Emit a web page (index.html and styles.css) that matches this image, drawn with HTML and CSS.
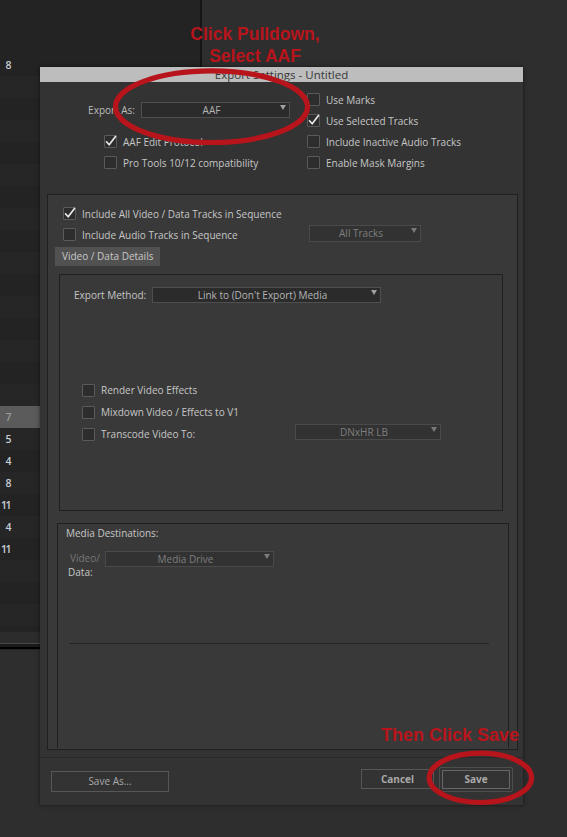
FILE: index.html
```html
<!DOCTYPE html>
<html lang="en">

<head>
	<meta charset="UTF-8">
	<meta name="viewport" content="width=device-width, initial-scale=1.0">
	<title>Export Settings - Untitled</title>
	<link rel="stylesheet" href="styles.css">
</head>

<body>
	<!-- bin window behind the dialog -->
	<div class="bin">
		<div class="binHead"></div>
		<div class="binRows">
			<div class="binRow"><span class="num">8</span></div>
			<div class="binRow"></div>
			<div class="binRow"></div>
			<div class="binRow"></div>
			<div class="binRow"></div>
			<div class="binRow"></div>
			<div class="binRow"></div>
			<div class="binRow"></div>
			<div class="binRow"></div>
			<div class="binRow"></div>
			<div class="binRow"></div>
			<div class="binRow"></div>
			<div class="binRow"></div>
			<div class="binRow"></div>
			<div class="binRow"></div>
			<div class="binRow"></div>
			<div class="binRow selected"><span class="num">7</span></div>
			<div class="binRow"><span class="num">5</span></div>
			<div class="binRow"><span class="num">4</span></div>
			<div class="binRow"><span class="num">8</span></div>
			<div class="binRow"><span class="num">11</span></div>
			<div class="binRow"><span class="num">4</span></div>
			<div class="binRow"><span class="num">11</span></div>
			<div class="binRow"></div>
			<div class="binRow"></div>
			<div class="binRow"></div>
		</div>
		<div class="binFoot"></div>
	</div>

	<div class="dialog">
		<div class="dialogTitle">Export Settings - Untitled</div>

		<div class="top">
			<div class="exportAs">
				<span class="exportLabel">Export As:</span>
				<div class="select exportSelect">AAF</div>
			</div>
			<label class="check colRight rowOne">
				<span class="box"></span>Use Marks
			</label>
			<label class="check colRight rowTwo">
				<span class="box"><svg viewBox="0 0 13 13"><path d="M2.5 6.8 L5.2 9.8 L11.5 1.5" /></svg></span>Use Selected Tracks
			</label>
			<label class="check colLeft rowThree">
				<span class="box"><svg viewBox="0 0 13 13"><path d="M2.5 6.8 L5.2 9.8 L11.5 1.5" /></svg></span>AAF Edit Protocol
			</label>
			<label class="check colRight rowThree">
				<span class="box"></span>Include Inactive Audio Tracks
			</label>
			<label class="check colLeft rowFour">
				<span class="box"></span>Pro Tools 10/12 compatibility
			</label>
			<label class="check colRight rowFour">
				<span class="box"></span>Enable Mask Margins
			</label>
		</div>

		<div class="panel">
			<label class="check panelCheck">
				<span class="box"><svg viewBox="0 0 13 13"><path d="M2.5 6.8 L5.2 9.8 L11.5 1.5" /></svg></span>Include All Video / Data Tracks in Sequence
			</label>
			<div class="audioRow">
				<label class="check panelCheck audioCheck">
					<span class="box"></span>Include Audio Tracks in Sequence
				</label>
				<div class="select disabled allTracks">All Tracks</div>
			</div>

			<div class="tab">Video / Data Details</div>

			<div class="details">
				<div class="methodRow">
					<span class="methodLabel">Export Method:</span>
					<div class="select methodSelect">Link to (Don't Export) Media</div>
				</div>
				<div class="effects">
					<label class="check fxCheck">
						<span class="box"></span>Render Video Effects
					</label>
					<label class="check fxCheck">
						<span class="box"></span>Mixdown Video / Effects to V1
					</label>
					<div class="transcodeRow">
						<label class="check fxCheck transcodeCheck">
							<span class="box"></span>Transcode Video To:
						</label>
						<div class="select disabled codecSelect">DNxHR LB</div>
					</div>
				</div>
			</div>

			<div class="media">
				<div class="mediaTitle">Media Destinations:</div>
				<div class="destRow">
					<div class="destLabel"><span class="dim">Video/</span><br><span class="dataWord">Data:</span></div>
					<div class="select disabled driveSelect">Media Drive</div>
				</div>
				<div class="mediaRule"></div>
			</div>
		</div>

		<div class="footer">
			<div class="btn saveAs">Save As...</div>
			<div class="btn cancel">Cancel</div>
			<div class="saveOuter">
				<div class="btn save">Save</div>
			</div>
		</div>
	</div>

	<!-- red tutorial marks drawn over the screenshot -->
	<svg class="marks" width="567" height="837" viewBox="0 0 567 837">
		<ellipse cx="211.5" cy="106.7" rx="96" ry="35.8" />
		<ellipse cx="480.4" cy="777.8" rx="51.2" ry="24.7" />
	</svg>
	<div class="note notePulldown">Click Pulldown,<br>Select AAF</div>
	<div class="note noteSave">Then Click Save</div>
</body>

</html>
```

FILE: styles.css
```css
body {
	margin: 0;
	width: 567px;
	height: 837px;
	overflow: hidden;
	position: relative;
	background: #2e2e2e;
	font-family: "Open Sans", "DejaVu Sans", sans-serif;
	font-size: 10px;
	color: #c6c6c6;
}

/* bin window */
.bin {
	position: absolute;
	left: 0;
	top: 0;
	width: 200px;
	height: 650px;
	border-right: 2px solid #151515;
	background: #232323;
	overflow: hidden;
}

.binHead {
	height: 54px;
	background: #232323;
}

.binRows {
	height: 578px;
	overflow: hidden;
}

.binRow {
	height: 22px;
	background: #232323;
	font-size: 10.5px;
	font-weight: 600;
	line-height: 22px;
	color: #c9ced4;
}

.binRow:nth-child(even) {
	background: #262626;
}

.binRow.selected {
	background: #5b5b5b;
	color: #9a9a9a;
}

.num {
	display: block;
	width: 10px;
	text-align: right;
	letter-spacing: -1.5px;
}

.binFoot {
	height: 11px;
	background: #2c2c2c;
	border-bottom: 1px solid #4a4a4a;
	box-shadow: 0 3px 0 #1a1a1a, 0 5px 0 #000;
}

/* dialog */
.dialog {
	position: absolute;
	left: 40px;
	top: 67px;
	width: 483px;
	height: 738px;
	background: #333333;
	box-shadow: 0 0 4px rgba(0, 0, 0, 0.55);
}

.dialogTitle {
	height: 15px;
	line-height: 15px;
	background: #bdbdbd;
	color: #383838;
	font-size: 11.5px;
	text-align: center;
	overflow: hidden;
}

.top {
	display: grid;
	grid-template-columns: 266px 1fr;
	grid-template-rows: repeat(4, 21px);
	padding-top: 7px;
}

.exportAs {
	grid-column: 1;
	grid-row: 1 / 3;
	display: flex;
	align-items: center;
	margin-top: -1px;
}

.exportLabel {
	width: 101px;
	padding-right: 6px;
	box-sizing: border-box;
	text-align: right;
	color: #bcbcbc;
}

.exportSelect {
	width: 149px;
	height: 17px;
	line-height: 15px;
}

.colLeft {
	grid-column: 1;
	padding-left: 64px;
}

.colRight {
	grid-column: 2;
	padding-left: 1px;
}

.rowOne { grid-row: 1; }
.rowTwo { grid-row: 2; }
.rowThree { grid-row: 3; }
.rowFour { grid-row: 4; }

/* checkbox rows */
.check {
	display: flex;
	align-items: center;
	gap: 6px;
	height: 21px;
	white-space: nowrap;
}

.box {
	flex: none;
	width: 13px;
	height: 13px;
	box-sizing: border-box;
	border: 1px solid #5a5a5a;
	border-radius: 1px;
	background: #2d2d2d;
	position: relative;
}

.box svg {
	position: absolute;
	left: -1px;
	top: -1px;
	width: 13px;
	height: 13px;
	overflow: visible;
}

.box path {
	fill: none;
	stroke: #e8e8e8;
	stroke-width: 1.7;
	stroke-linecap: round;
	stroke-linejoin: round;
}

/* selects */
.select {
	position: relative;
	box-sizing: border-box;
	height: 16px;
	line-height: 14px;
	padding-right: 8px;
	border: 1px solid #4f4f4f;
	background: #2b2b2b;
	color: #b4b4b4;
	text-align: center;
	white-space: nowrap;
}

.select::after {
	content: "";
	position: absolute;
	right: 3px;
	top: 2px;
	border-left: 3px solid transparent;
	border-right: 3px solid transparent;
	border-top: 5px solid #a0a0a0;
}

.select.disabled {
	background: #323232;
	border-color: #4a4a4a;
	color: #7e7e7e;
}

.select.disabled::after {
	border-top-color: #7a7a7a;
}

/* main panel */
.panel {
	box-sizing: border-box;
	height: 556px;
	margin: 21px 5px 0 7px;
	padding-top: 8px;
	border: 1px solid #202020;
	background: #393939;
	display: flex;
	flex-direction: column;
}

.panelCheck {
	margin-left: 15px;
}

.audioRow {
	display: flex;
	align-items: center;
}

.audioCheck {
	width: 246px;
}

.allTracks {
	width: 112px;
	height: 17px;
	line-height: 15px;
	margin-top: -2px;
}

.tab {
	width: 105px;
	height: 19px;
	box-sizing: border-box;
	margin: 2px 0 0 7px;
	padding-left: 7px;
	line-height: 19px;
	background: #515151;
	color: #c8c8c8;
}

.details {
	box-sizing: border-box;
	height: 237px;
	margin: 8px 14px 0 11px;
	padding: 12px 0 0 14px;
	border: 1px solid #1f1f1f;
}

.methodRow {
	display: flex;
	align-items: center;
}

.methodLabel {
	width: 78px;
}

.methodSelect {
	width: 229px;
}

.effects {
	margin-top: 76px;
	padding-left: 8px;
}

.fxCheck {
	height: 22px;
}

.transcodeRow {
	display: flex;
	align-items: center;
}

.transcodeCheck {
	width: 213px;
}

.codecSelect {
	width: 146px;
	margin-top: -4px;
}

.media {
	flex: 1;
	margin: 12px 8px 1px 9px;
	padding: 2px 0 0 8px;
	border: 1px solid #1f1f1f;
	border-bottom: none;
}

.mediaTitle {
	line-height: 14px;
}

.destRow {
	display: flex;
	align-items: flex-start;
	margin-top: 11px;
}

.destLabel {
	width: 39px;
	box-sizing: border-box;
	padding-left: 4px;
	line-height: 14.4px;
}

.dim {
	color: #767676;
}

.dataWord {
	margin-left: -2px;
}

.driveSelect {
	width: 169px;
}

.mediaRule {
	width: 420px;
	height: 1px;
	margin: 63px 0 0 3px;
	background: #242424;
}

/* footer buttons */
.footer {
	height: 47px;
	margin-top: 7px;
	border-top: 1px solid #282828;
	padding: 0 10px 0 11px;
	display: flex;
	align-items: center;
}

.btn {
	box-sizing: border-box;
	border: 1px solid #575757;
	color: #a9a9a9;
	text-align: center;
}

.saveAs {
	width: 118px;
	height: 21px;
	line-height: 19px;
}

.cancel {
	width: 73px;
	height: 20px;
	line-height: 18px;
	margin: 0 0 5px auto;
	font-weight: 700;
}

.saveOuter {
	box-sizing: border-box;
	width: 74px;
	height: 25px;
	margin: 0 0 4px 5px;
	padding: 2px;
	border: 1px solid #4d4d4d;
	border-radius: 2px;
}

.save {
	height: 19px;
	line-height: 17px;
	border-color: #666;
	font-weight: 700;
}

/* red annotations */
.marks {
	position: absolute;
	left: 0;
	top: 0;
	pointer-events: none;
}

.marks ellipse {
	fill: none;
	stroke: #b8141b;
	stroke-width: 5.2;
}

.note {
	position: absolute;
	width: 200px;
	text-align: center;
	color: #b8141b;
	font-family: "Liberation Sans", Arial, sans-serif;
	font-weight: 700;
}

.notePulldown {
	left: 155px;
	top: 24px;
	font-size: 17.5px;
	line-height: 21.7px;
}

.noteSave {
	left: 350px;
	top: 725px;
	font-size: 18px;
	line-height: 20px;
}
```
